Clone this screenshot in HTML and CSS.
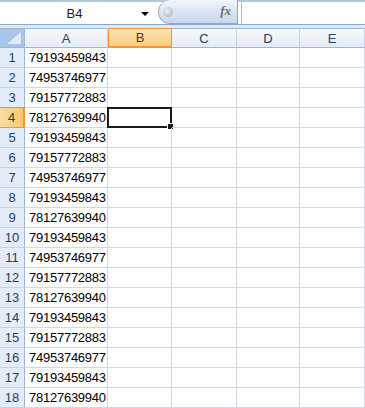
FILE: index.html
```html
<!DOCTYPE html>
<html lang="en">
<head>
    <meta charset="UTF-8">
    <meta name="viewport" content="width=device-width, initial-scale=1.0">
    <title>Book1</title>
    <link rel="stylesheet" href="styles.css">
</head>
<body>
    <!-- Barra de formulas -->
    <div class="formula-bar">
        <div class="name-box">
            <span class="name-text">B4</span>
            <span class="name-arrow"></span>
        </div>
        <div class="fx-pill">
            <span class="fx-knob"></span>
            <span class="fx-text">fx</span>
        </div>
        <div class="formula-input"></div>
    </div>
    <div class="bar-gap"></div>

    <!-- Hoja -->
    <div class="sheet" id="sheet">
        <div class="hd corner"><span class="corner-tri"></span></div>
        <div class="hd col">A</div>
        <div class="hd col active">B</div>
        <div class="hd col">C</div>
        <div class="hd col">D</div>
        <div class="hd col">E</div>
    </div>

    <script src="sheet.js"></script>
</body>
</html>
```

FILE: sheet.js
```js
var numbers = [
    '79193459843', '74953746977', '79157772883', '78127639940',
    '79193459843', '79157772883', '74953746977', '79193459843',
    '78127639940', '79193459843', '74953746977', '79157772883',
    '78127639940', '79193459843', '79157772883', '74953746977',
    '79193459843', '78127639940'
];

var sheet = document.getElementById('sheet');

numbers.forEach(function (num, i) {
    var row = i + 1;
    var head = document.createElement('div');
    head.className = 'hd rowhd' + (row === 4 ? ' active' : '');
    head.textContent = row;
    sheet.appendChild(head);

    var a = document.createElement('div');
    a.className = 'cell num';
    a.textContent = num;
    sheet.appendChild(a);

    for (var c = 0; c < 4; c++) {
        var cell = document.createElement('div');
        cell.className = 'cell';
        if (row === 4 && c === 0) {
            cell.className += ' selected';
            var box = document.createElement('span');
            box.className = 'sel-box';
            var handle = document.createElement('span');
            handle.className = 'sel-handle';
            box.appendChild(handle);
            cell.appendChild(box);
        }
        sheet.appendChild(cell);
    }
});
```

FILE: styles.css
```css
body {
    margin: 0;
    padding: 0;
    background: #ffffff;
    font-family: "Liberation Sans", Arial, sans-serif;
    font-size: 13px;
    overflow: hidden;
}

/* Barra de formulas */
.formula-bar {
    display: flex;
    height: 22px;
    border-top: 2px solid #b4c7df;
    border-bottom: 1px solid #8aa6c9;
    background: #ffffff;
}

.name-box {
    width: 155px;
    display: flex;
    align-items: center;
    position: relative;
}

.name-text {
    flex: 1;
    text-align: center;
    color: #1c1c1c;
    font-size: 13px;
    padding-left: 8px;
}

.name-arrow {
    width: 0;
    height: 0;
    border-left: 4px solid transparent;
    border-right: 4px solid transparent;
    border-top: 4px solid #000000;
    margin-right: 6px;
    margin-top: 2px;
}

.fx-pill {
    width: 80px;
    margin-left: 3px;
    margin-top: -2px;
    height: 24px;
    box-sizing: border-box;
    border: 1px solid #8ea9cc;
    border-top: none;
    border-radius: 12px 0 0 12px;
    background: linear-gradient(#f3f6fb, #d9e4f3 55%, #c6d6ed);
    display: flex;
    align-items: center;
    justify-content: space-between;
    padding: 0 6px 0 4px;
}

.fx-knob {
    width: 10px;
    height: 10px;
    border-radius: 50%;
    background: radial-gradient(circle at 40% 40%, #f2f2f2, #b9bfc7 70%, #a3aab4);
}

.fx-text {
    font-family: "Liberation Serif", "Times New Roman", serif;
    font-style: italic;
    font-weight: bold;
    font-size: 13px;
    color: #6b6f75;
    margin-top: -2px;
}

.formula-input {
    flex: 1;
    margin-left: 3px;
    border-left: 1px solid #a9bdd8;
    background: #ffffff;
}

.bar-gap {
    height: 3px;
    background: #dfe8f5;
}

/* Hoja */
.sheet {
    display: grid;
    grid-template-columns: 25px 83px 64px 65px 63px 65px;
    grid-auto-rows: 20px;
}

.hd {
    display: flex;
    align-items: center;
    justify-content: center;
    box-sizing: border-box;
    color: #27415f;
    background: linear-gradient(#f7f9fc, #e4ebf6);
    border-right: 1px solid #9eb6ce;
    border-bottom: 1px solid #9eb6ce;
}

.hd.col {
    height: 20px;
    border-top: 1px solid #9eb6ce;
    border-right-color: #c5d3e4;
}

.hd.col:last-child {
    border-right-color: #9eb6ce;
}

.hd.rowhd {
    background: #e4ecf7;
    border-bottom-color: #c5d3e4;
}

.hd.active {
    background: linear-gradient(#fbe4b4, #f7cf7d);
    border-color: #f29536;
    color: #3b3b3b;
}

.hd.col.active {
    border-left: 1px solid #f29536;
    border-bottom: 2px solid #f29536;
}

.hd.rowhd.active {
    background: linear-gradient(90deg, #f9dca4, #f6c96f);
    border-top: 1px solid #f29536;
    margin-top: -1px;
    height: 21px;
    border-right: 2px solid #f29536;
}

.corner {
    background: #a9c4e9;
    border: 1px solid #9eb6ce;
    border-left: none;
    position: relative;
}

.corner-tri {
    position: absolute;
    right: 3px;
    bottom: 3px;
    width: 0;
    height: 0;
    border-left: 14px solid transparent;
    border-bottom: 12px solid #e2eaf6;
}

.cell {
    box-sizing: border-box;
    border-right: 1px solid #d0d7e5;
    border-bottom: 1px solid #d0d7e5;
    position: relative;
}

.cell.num {
    padding-left: 4px;
    line-height: 20px;
    color: #000000;
    letter-spacing: -0.25px;
    white-space: nowrap;
}

.sel-box {
    position: absolute;
    left: -1px;
    top: -1px;
    width: 65px;
    height: 21px;
    box-sizing: border-box;
    border: 2px solid #1a1a1a;
}

.sel-handle {
    position: absolute;
    right: -4px;
    bottom: -4px;
    width: 5px;
    height: 5px;
    background: #1a1a1a;
    border: 1px solid #ffffff;
}
```
